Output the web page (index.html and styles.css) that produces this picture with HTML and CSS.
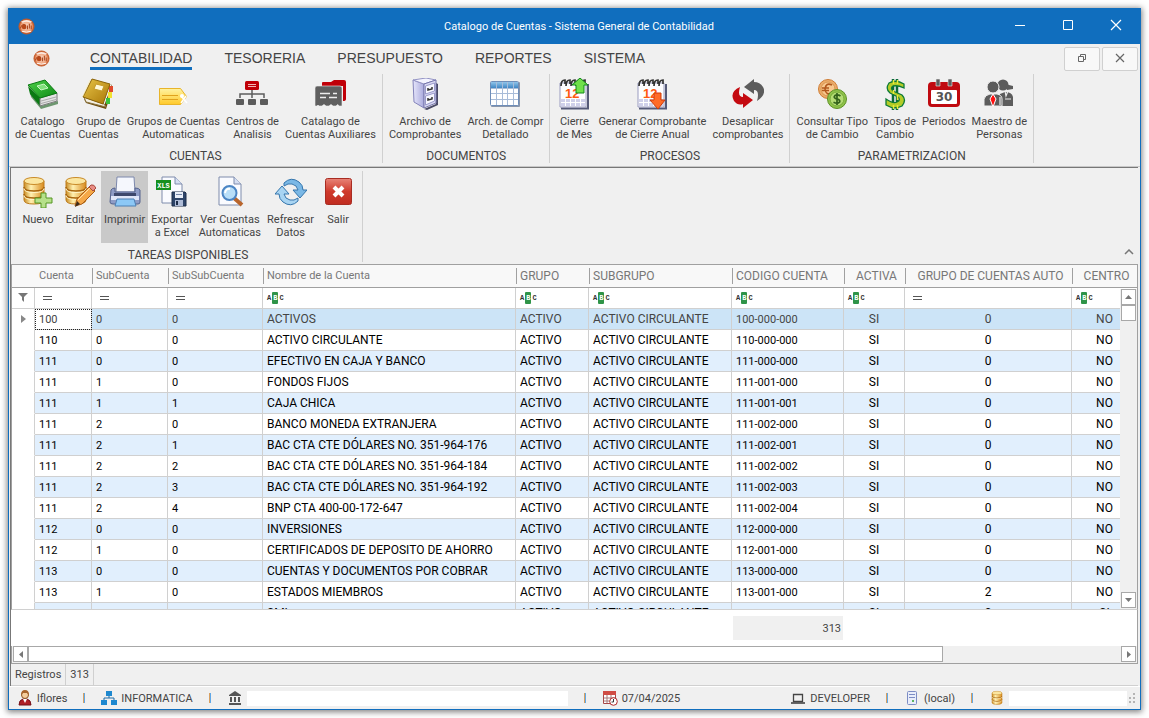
FILE: index.html
```html
<!DOCTYPE html>
<html lang="es">
<head>
    <meta charset="UTF-8">
    <meta name="viewport" content="width=device-width, initial-scale=1.0">
    <title>Catalogo de Cuentas - Sistema General de Contabilidad</title>
    <link rel="stylesheet" href="styles.css">
</head>
<body>
    <!-- Degradados y simbolos compartidos -->
    <svg class="defs" width="0" height="0" aria-hidden="true">
        <defs>
            <linearGradient id="gGold" x1="0" x2="1"><stop offset="0" stop-color="#c98b22"/><stop offset=".35" stop-color="#fff0b0"/><stop offset="1" stop-color="#d98a1c"/></linearGradient>
            <linearGradient id="gGreen" x1="0" x2="1" y2="1"><stop offset="0" stop-color="#4fd04a"/><stop offset="1" stop-color="#0c8a14"/></linearGradient>
            <linearGradient id="gBook" x1="0" x2="1" y2="1"><stop offset="0" stop-color="#e8c548"/><stop offset="1" stop-color="#a87506"/></linearGradient>
            <linearGradient id="gTag" x2="0" y2="1"><stop offset="0" stop-color="#fff3a0"/><stop offset="1" stop-color="#ffc92a"/></linearGradient>
            <linearGradient id="gCab" x1="0" x2="1"><stop offset="0" stop-color="#e6e6fb"/><stop offset="1" stop-color="#a9a9dc"/></linearGradient>
            <linearGradient id="gBlue" x2="0" y2="1"><stop offset="0" stop-color="#8fc4ea"/><stop offset="1" stop-color="#3f86c4"/></linearGradient>
            <linearGradient id="gRed" x2="0" y2="1"><stop offset="0" stop-color="#e88478"/><stop offset=".5" stop-color="#cf3a2c"/><stop offset="1" stop-color="#c02c20"/></linearGradient>
            <radialGradient id="gApp"><stop offset="0" stop-color="#fbe0d0"/><stop offset=".7" stop-color="#f0a47c"/><stop offset="1" stop-color="#c4501c"/></radialGradient>
        </defs>
        <symbol id="app" viewBox="0 0 18 18">
            <circle cx="9" cy="9" r="8" fill="url(#gApp)" stroke="#c65a28"/>
            <path d="M3 4q6-4 12 0l-2 1q-4-2-8 0z" fill="#fff" opacity=".8"/>
            <path d="M2.500 11q2-6 6-3M10 12V8M12 11V6M14 12V8" stroke="#a8441c" stroke-width="1.100" fill="none"/>
            <circle cx="6.500" cy="9.500" r="2.500" fill="#b8481a"/>
            <path d="M4 14q5 2 10 0" stroke="#fff" fill="none"/>
        </symbol>
        <symbol id="db" viewBox="0 0 32 32">
            <path d="M2 5v19q0 4 10 4t10-4V5z" fill="url(#gGold)" stroke="#bd7b1a"/>
            <path d="M2 11q0 4 10 4t10-4M2 18q0 4 10 4t10-4" fill="none" stroke="#a8650f" stroke-width="1.600"/>
            <path d="M2 12.500q0 4 10 4t10-4M2 19.500q0 4 10 4t10-4" fill="none" stroke="#fff4c8"/>
            <ellipse cx="12" cy="5" rx="10" ry="3.500" fill="#fbe6a0" stroke="#c98a28"/>
        </symbol>
        <symbol id="cal12" viewBox="0 0 32 32">
            <path d="M3 30.500h27V6" fill="none" stroke="#555a78" stroke-width="2"/>
            <path d="M2 5h26v24H2z" fill="#fdfdff" stroke="#9a9cc0"/>
            <path d="M3 21h24v7H3z" fill="#cfd0ea"/>
            <path d="M3 24.500h24M7.500 21v7M12.500 21v7M17.500 21v7M22.500 21v7" stroke="#fff"/>
            <path d="M3 8q0-6 4-6v4M8 8q0-6 4-6v4M13 8q0-6 4-6v4M18 8q0-6 4-6v4M23 8q0-6 4-6v4" fill="none" stroke="#333" stroke-width="1.700"/>
            <text x="7" y="20" class="num12">12</text>
        </symbol>
    </svg>

    <div class="window">
        <header class="titlebar">
            <svg class="app-icon"><use href="#app"/></svg>
            <h1>Catalogo de Cuentas - Sistema General de Contabilidad</h1>
            <div class="window-buttons">
                <button type="button" aria-label="Minimizar"><svg width="12" height="12"><path d="M1 6.500h10" stroke="#fff"/></svg></button>
                <button type="button" aria-label="Maximizar"><svg width="12" height="12"><path d="M1.500 1.500h9v9h-9z" fill="none" stroke="#fff"/></svg></button>
                <button type="button" aria-label="Cerrar"><svg width="12" height="12"><path d="M1 1l10 10M11 1L1 11" stroke="#fff" stroke-width="1.200"/></svg></button>
            </div>
        </header>

        <!-- Pestañas -->
        <nav class="tabs">
            <svg class="app-icon"><use href="#app"/></svg>
            <a href="#" class="active">CONTABILIDAD</a>
            <a href="#">TESORERIA</a>
            <a href="#">PRESUPUESTO</a>
            <a href="#">REPORTES</a>
            <a href="#">SISTEMA</a>
            <div class="child-buttons">
                <button type="button" aria-label="Restaurar"><svg width="10" height="10"><path d="M1.500 3.500h5v5h-5zM3.500 3.500v-2h5v5h-2" fill="none" stroke="#666"/></svg></button>
                <button type="button" aria-label="Cerrar ventana"><svg width="10" height="10"><path d="M1 1l8 8M9 1L1 9" stroke="#666" stroke-width="1.200"/></svg></button>
            </div>
        </nav>

        <!-- Cinta principal -->
        <div class="ribbon">
            <section class="group">
                <div class="items">
                    <button type="button">
                        <svg viewBox="0 0 32 32"><path d="M3 14l11 14 17-5v3L14 31 4 19z" fill="#175c1b" opacity=".6"/><path d="M1 8l12 12v8L3 16z" fill="#0a7a12"/><path d="M13 20l17-5v8l-17 5z" fill="#e4e4e4" stroke="#777"/><path d="M14 23l15-4M14 25.500l15-4" stroke="#aaa"/><path d="M1 7l17-5 12 13-17 5z" fill="url(#gGreen)" stroke="#0b7a12"/><path d="M10 8l7-2 4 4-7 2z" fill="#7fe07a" stroke="#c8f5c2"/></svg>
                        <span>Catalogo<br>de Cuentas</span></button>
                    <button type="button">
                        <svg viewBox="0 0 32 32"><path d="M2 21l20 7 8-22v6l-6 19L4 25z" fill="#6b4a0a"/><path d="M2 19l20 7 2 3-20-5z" fill="#f3efe2" stroke="#8b7440"/><path d="M27 8h4v6h-4z" fill="#e04a2c"/><path d="M26 14h4v6h-4z" fill="#f2e230"/><path d="M24 20h4v6h-4z" fill="#3cc23c"/><path d="M10 1l18 5-7 20-20-7z" fill="url(#gBook)" stroke="#8a6208"/><path d="M8 2L1 18" stroke="#fff0a8" opacity=".6"/><path d="M14 6l8 2-2 5-8-2z" fill="#fff8d8" stroke="#c59a28"/></svg>
                        <span>Grupo de<br>Cuentas</span></button>
                    <button type="button">
                        <svg viewBox="0 0 32 32"><path d="M2.500 10.500h21l6 8-6 8h-21z" fill="url(#gTag)" stroke="#e8b42a"/><path d="M5 17.500h16M5 21.500h16" stroke="#e0a21c"/><circle cx="25" cy="18" r="2" fill="#fff"/><path d="M24 18l6 7M29 18l-5 7" stroke="#fff" stroke-width="1.500"/></svg>
                        <span>Grupos de Cuentas<br>Automaticas</span></button>
                    <button type="button">
                        <svg viewBox="0 0 32 32"><rect x="9" y="3" width="14" height="9" rx="1.500" fill="#c00008"/><path d="M12 6.500h8M12 8.500h8" stroke="#f2b8b8"/><path d="M16 12v8M4 20v-4h24v4" fill="none" stroke="#5c5c5c" stroke-width="1.500"/><rect y="21" width="8" height="6" rx="1" fill="#5c5c5c"/><rect x="12" y="21" width="8" height="6" rx="1" fill="#5c5c5c"/><rect x="24" y="21" width="8" height="6" rx="1" fill="#5c5c5c"/></svg>
                        <span>Centros de<br>Analisis</span></button>
                    <button type="button">
                        <svg viewBox="0 0 32 32"><path d="M8 8V5q0-1 1-1h8l3-2h10q2 0 2 2v17q0 2-3 2V8z" fill="#c00008"/><path d="M1 10q0-2 2-2h23q2 0 2 2v18h-3q-1-3-3 0h-3q-2-3-4 0h-3q-2-3-4 0H5q-1-2-2 0H1z" fill="#5f5f5f" stroke="#efefef" stroke-width=".600"/><path d="M6 15.500h10M19 15.500h4M6 19.500h6M15 19.500h8" stroke="#eee" stroke-width="1.500"/></svg>
                        <span>Catalago de<br>Cuentas Auxiliares</span></button>
                </div>
                <h2>CUENTAS</h2>
            </section>
            <section class="group">
                <div class="items">
                    <button type="button">
                        <svg viewBox="0 0 32 32"><path d="M15 31l12-5V5l2 1v21l-11 5z" fill="#4a4a66"/><path d="M4 2l11 4v24L5 24z" fill="url(#gCab)" stroke="#8484ba"/><path d="M4 2l13-2 10 2-12 4z" fill="#f4f4ff" stroke="#9393c4"/><path d="M15 6l12-4v23l-12 5z" fill="#d8d8f2" stroke="#7676ac"/><path d="M16.500 8l9-3v8l-9 3zM16.500 18l9-3v8l-9 4z" fill="#f6f6ff" stroke="#9a9acb"/><path d="M19 10v2l4-1V9M19 20v2l4-1v-2" fill="none" stroke="#333" stroke-width="1.500"/></svg>
                        <span>Archivo de<br>Comprobantes</span></button>
                    <button type="button">
                        <svg viewBox="0 0 32 32"><rect x="2" y="4" width="29" height="25" rx="1" fill="#8a96aa"/><rect x="1.500" y="3.500" width="28" height="24" rx="1" fill="#fff" stroke="#6e8db8"/><path d="M2 4h27v6H2z" fill="url(#gBlue)"/><path d="M2 10.500h27M2 15.500h27M2 21.500h27M7.500 4v23M13.500 4v23M18.500 4v23M24.500 4v23" stroke="#a8bcd8"/></svg>
                        <span>Arch. de Compr<br>Detallado</span></button>
                </div>
                <h2>DOCUMENTOS</h2>
            </section>
            <section class="group">
                <div class="items">
                    <button type="button">
                        <svg viewBox="0 0 32 32"><use href="#cal12"/><path d="M22 0l8 7h-4v8h-8V7h-4z" fill="#6fe04a" stroke="#138a1c"/></svg>
                        <span>Cierre<br>de Mes</span></button>
                    <button type="button">
                        <svg viewBox="0 0 32 32"><use href="#cal12"/><path d="M18 15h7v7h4l-7 9-8-9h4z" fill="#ff6b28" stroke="#cf3b08"/></svg>
                        <span>Generar Comprobante<br>de Cierre Anual</span></button>
                    <button type="button">
                        <svg viewBox="0 0 32 32"><path d="M8 9Q-3 14 2 23q4 5 9 3v4l10-8-10-7v4Q5 19 8 9z" fill="#c40a10"/><path d="M22 1L12 9l10 7v-4q6 0 3 11 10-7 6-14-3-5-9-5z" fill="#5c5c5c"/></svg>
                        <span>Desaplicar<br>comprobantes</span></button>
                </div>
                <h2>PROCESOS</h2>
            </section>
            <section class="group">
                <div class="items">
                    <button type="button">
                        <svg viewBox="0 0 32 32"><circle cx="12" cy="11" r="9.500" fill="#ecac6a" stroke="#cf7d35"/><circle cx="12" cy="11" r="7" fill="#f8c88e" stroke="#da9650"/><path d="M16 7q-6-3-7 4 1 7 7 4M6 10h7M6 12.500h7" fill="none" stroke="#b2581c" stroke-width="1.600"/><circle cx="21" cy="21" r="9.500" fill="#8fc24a" stroke="#5d9126"/><circle cx="21" cy="21" r="7" fill="#b4dc74" stroke="#76ab38"/><path d="M24.500 18q-3-2-5.500-.5-2 2 1 3.200 5 1 3.500 3.500-2 2-6 0M21 15v12" fill="none" stroke="#32611a" stroke-width="1.700"/></svg>
                        <span>Consultar Tipo<br>de Cambio</span></button>
                    <button type="button">
                        <svg viewBox="0 0 32 32"><path d="M14 1v31M18 1v31" stroke="#0c6b38" stroke-width="2.500"/><path d="M25 10V6q-8-5-15-1-4 6 1 10l8 4q3 3-1 5-4 2-11-3v6q8 5 16 1 5-6 0-11l-9-4q-3-3 0-5 5-1 11 2z" fill="#b4cc28" stroke="#0c7a38" stroke-width="1.300"/><path d="M14.500 2v4M18.500 2v4M14.500 12v4M18.500 17v5M14.500 27v4M18.500 27v4" stroke="#e8ea3a" stroke-width="1.500"/></svg>
                        <span>Tipos de<br>Cambio</span></button>
                    <button type="button">
                        <svg viewBox="0 0 32 32"><rect y="4" width="32" height="25" rx="4" fill="#c00a10"/><rect x="3" y="12" width="26" height="14" rx="1" fill="#fff"/><path d="M8 1h4v7H8zM20 1h4v7h-4z" fill="#5c5c5c" stroke="#efefef" stroke-width=".600"/><text x="16" y="23" class="num30">30</text></svg>
                        <span>Periodos</span></button>
                    <button type="button">
                        <svg viewBox="0 0 32 32"><g fill="#5c5c5c"><circle cx="20" cy="7" r="5.500"/><path d="M22 6l8 2v3l-6 1zM17 16l5-2q7 0 8 5v9H17z"/><circle cx="10" cy="9" r="6" stroke="#efefef"/><path d="M1 28V21q1-4 6-5h7q5 1 5 5v7z" stroke="#efefef"/></g><path d="M10 16l3 5-3 8-3-8z" fill="#ff1010" stroke="#fff"/><path d="M22 13l1 5 2-5M22 21h6M17 19v8" stroke="#efefef" stroke-width="1.200" fill="none"/></svg>
                        <span>Maestro de<br>Personas</span></button>
                </div>
                <h2>PARAMETRIZACION</h2>
            </section>
        </div>

        <main class="child">
            <!-- Tareas -->
            <div class="tasks">
                <section class="group">
                    <div class="items">
                        <button type="button">
                            <svg viewBox="0 0 32 32"><use href="#db"/><path d="M19 17h5v5h6v5h-6v5h-5v-5h-6v-5h6z" fill="#b6e08a" stroke="#559622"/></svg>
                            <span>Nuevo</span></button>
                        <button type="button">
                            <svg viewBox="0 0 32 32"><use href="#db"/><path d="M11 30l2-7 13-13 5 5-13 13z" fill="#f5a848" stroke="#a85c18"/><path d="M14 24L27 11" stroke="#ffe2a8"/><path d="M25 11l2-2q3-1 5 3l-3 3z" fill="#e88c84" stroke="#a84a40"/><path d="M11 31l2-6 3 3z" fill="#3c2c1c"/></svg>
                            <span>Editar</span></button>
                        <button type="button" class="pressed">
                            <svg viewBox="0 0 32 32"><path d="M8 1h17l1 15H7z" fill="#f5f7fd" stroke="#7c88ac"/><path d="M2 14q1-2 4-2v4h20v-4q4 0 5 2v12q0 2-2 2H4q-3 0-3-2z" fill="#8e9cc6" stroke="#56648e"/><path d="M5 17h22v4H5z" fill="#3d486c"/><path d="M2 20h28v4H2z" fill="#dfe6f8"/><path d="M8 23h17l2 7H6z" fill="#8cc8f6" stroke="#4c80b4"/></svg>
                            <span>Imprimir</span></button>
                        <button type="button">
                            <svg viewBox="0 0 32 32"><path d="M6 1h13l7 7v19H6z" fill="#fafbff" stroke="#7e8cac"/><path d="M19 1v7h7" fill="#d5def2" stroke="#7e8cac"/><path d="M0 4h15v10H0z" fill="#16901e"/><text x="7.500" y="12" class="xls">XLS</text><path d="M16 16h13l1 1v13H16z" fill="#2d4468" stroke="#1d2c48"/><path d="M19 16h8v6h-8z" fill="#e9eef8"/><path d="M20 18.500h6" stroke="#7485a8"/><path d="M19 24h8v6h-8z" fill="#aebbd6"/><path d="M20 25h2v4h-2z" fill="#1d2c48"/></svg>
                            <span>Exportar<br>a Excel</span></button>
                        <button type="button">
                            <svg viewBox="0 0 32 32"><path d="M5 1h15l7 7v21H5z" fill="#fafbff" stroke="#7e8cac"/><path d="M20 1v7h7" fill="#d5def2" stroke="#7e8cac"/><path d="M20 22l8 7" stroke="#b8652c" stroke-width="4"/><circle cx="15.500" cy="17" r="7" fill="#b8def8" stroke="#4c85c4" stroke-width="2"/><path d="M11 17q1-5 5-4" stroke="#fff" stroke-width="2" fill="none"/></svg>
                            <span>Ver Cuentas<br>Automaticas</span></button>
                        <button type="button">
                            <svg viewBox="0 0 32 32"><path d="M9 7Q16 0 24 6q4 3 4 8h4l-7 8-7-8h5q-1-5-6-6-4-1-8 2z" fill="#7ab8e6" stroke="#3475ac"/><path d="M23 25q-7 7-15 1-4-3-4-8H0l7-8 7 8H9q1 5 6 6 4 1 8-2z" fill="#a8d4f2" stroke="#3475ac"/></svg>
                            <span>Refrescar<br>Datos</span></button>
                        <button type="button">
                            <svg viewBox="0 0 32 32"><rect x="3.500" y="2.500" width="26" height="26" rx="2" fill="url(#gRed)" stroke="#a82c22"/><path d="M12 11l9 9M21 11l-9 9" stroke="#fff" stroke-width="4"/></svg>
                            <span>Salir</span></button>
                    </div>
                    <h2>TAREAS DISPONIBLES</h2>
                </section>
                <button type="button" class="collapse" aria-label="Contraer cinta"><svg width="10" height="6"><path d="M1 5l4-4 4 4" fill="none" stroke="#777" stroke-width="1.500"/></svg></button>
            </div>

            <!-- Catalogo -->
            <div class="grid">
                <table>
                    <colgroup>
                        <col class="c-mark"><col class="c-cuenta"><col class="c-sub"><col class="c-subsub"><col><col class="c-grupo"><col class="c-subgrupo"><col class="c-codigo"><col class="c-activa"><col class="c-auto"><col class="c-centro">
                    </colgroup>
                    <thead>
                        <tr>
                            <th></th>
                            <th><span>Cuenta</span></th>
                            <th><span>SubCuenta</span></th>
                            <th><span>SubSubCuenta</span></th>
                            <th><span>Nombre de la Cuenta</span></th>
                            <th class="caps"><span>GRUPO</span></th>
                            <th class="caps"><span>SUBGRUPO</span></th>
                            <th class="caps"><span>CODIGO CUENTA</span></th>
                            <th class="caps center"><span>ACTIVA</span></th>
                            <th class="caps center"><span>GRUPO DE CUENTAS AUTO</span></th>
                            <th class="caps center"><span>CENTRO</span></th>
                        </tr>
                        <tr class="filters">
                            <td class="mark"><svg width="10" height="9"><path d="M0 0h10L6 4v5L4 7V4z" fill="#777"/></svg></td>
                            <td><label><i class="eq"></i><input type="text" aria-label="Filtrar Cuenta"></label></td>
                            <td><label><i class="eq"></i><input type="text" aria-label="Filtrar SubCuenta"></label></td>
                            <td><label><i class="eq"></i><input type="text" aria-label="Filtrar SubSubCuenta"></label></td>
                            <td><label><span class="abc">A<b>B</b>C</span><input type="text" aria-label="Filtrar Nombre"></label></td>
                            <td><label><span class="abc">A<b>B</b>C</span><input type="text" aria-label="Filtrar Grupo"></label></td>
                            <td><label><span class="abc">A<b>B</b>C</span><input type="text" aria-label="Filtrar Subgrupo"></label></td>
                            <td><label><span class="abc">A<b>B</b>C</span><input type="text" aria-label="Filtrar Codigo"></label></td>
                            <td><label><span class="abc">A<b>B</b>C</span><input type="text" aria-label="Filtrar Activa"></label></td>
                            <td><label><i class="eq"></i><input type="text" aria-label="Filtrar Grupo Auto"></label></td>
                            <td><label><span class="abc">A<b>B</b>C</span><input type="text" aria-label="Filtrar Centro"></label></td>
                        </tr>
                    </thead>
                    <tbody>
                        <tr class="selected"><td class="mark"><svg width="5" height="8"><path d="M0 0l5 4-5 4z" fill="#888"/></svg></td><td class="focused">100</td><td>0</td><td>0</td><td>ACTIVOS</td><td>ACTIVO</td><td>ACTIVO CIRCULANTE</td><td>100-000-000</td><td>SI</td><td>0</td><td>NO</td></tr>
                        <tr><td class="mark"></td><td>110</td><td>0</td><td>0</td><td>ACTIVO CIRCULANTE</td><td>ACTIVO</td><td>ACTIVO CIRCULANTE</td><td>110-000-000</td><td>SI</td><td>0</td><td>NO</td></tr>
                        <tr><td class="mark"></td><td>111</td><td>0</td><td>0</td><td>EFECTIVO EN CAJA Y BANCO</td><td>ACTIVO</td><td>ACTIVO CIRCULANTE</td><td>111-000-000</td><td>SI</td><td>0</td><td>NO</td></tr>
                        <tr><td class="mark"></td><td>111</td><td>1</td><td>0</td><td>FONDOS FIJOS</td><td>ACTIVO</td><td>ACTIVO CIRCULANTE</td><td>111-001-000</td><td>SI</td><td>0</td><td>NO</td></tr>
                        <tr><td class="mark"></td><td>111</td><td>1</td><td>1</td><td>CAJA CHICA</td><td>ACTIVO</td><td>ACTIVO CIRCULANTE</td><td>111-001-001</td><td>SI</td><td>0</td><td>NO</td></tr>
                        <tr><td class="mark"></td><td>111</td><td>2</td><td>0</td><td>BANCO MONEDA EXTRANJERA</td><td>ACTIVO</td><td>ACTIVO CIRCULANTE</td><td>111-002-000</td><td>SI</td><td>0</td><td>NO</td></tr>
                        <tr><td class="mark"></td><td>111</td><td>2</td><td>1</td><td>BAC CTA CTE DÓLARES NO. 351-964-176</td><td>ACTIVO</td><td>ACTIVO CIRCULANTE</td><td>111-002-001</td><td>SI</td><td>0</td><td>NO</td></tr>
                        <tr><td class="mark"></td><td>111</td><td>2</td><td>2</td><td>BAC CTA CTE DÓLARES NO. 351-964-184</td><td>ACTIVO</td><td>ACTIVO CIRCULANTE</td><td>111-002-002</td><td>SI</td><td>0</td><td>NO</td></tr>
                        <tr><td class="mark"></td><td>111</td><td>2</td><td>3</td><td>BAC CTA CTE DÓLARES NO. 351-964-192</td><td>ACTIVO</td><td>ACTIVO CIRCULANTE</td><td>111-002-003</td><td>SI</td><td>0</td><td>NO</td></tr>
                        <tr><td class="mark"></td><td>111</td><td>2</td><td>4</td><td>BNP CTA 400-00-172-647</td><td>ACTIVO</td><td>ACTIVO CIRCULANTE</td><td>111-002-004</td><td>SI</td><td>0</td><td>NO</td></tr>
                        <tr><td class="mark"></td><td>112</td><td>0</td><td>0</td><td>INVERSIONES</td><td>ACTIVO</td><td>ACTIVO CIRCULANTE</td><td>112-000-000</td><td>SI</td><td>0</td><td>NO</td></tr>
                        <tr><td class="mark"></td><td>112</td><td>1</td><td>0</td><td>CERTIFICADOS DE DEPOSITO DE AHORRO</td><td>ACTIVO</td><td>ACTIVO CIRCULANTE</td><td>112-001-000</td><td>SI</td><td>0</td><td>NO</td></tr>
                        <tr><td class="mark"></td><td>113</td><td>0</td><td>0</td><td>CUENTAS Y DOCUMENTOS POR COBRAR</td><td>ACTIVO</td><td>ACTIVO CIRCULANTE</td><td>113-000-000</td><td>SI</td><td>0</td><td>NO</td></tr>
                        <tr><td class="mark"></td><td>113</td><td>1</td><td>0</td><td>ESTADOS MIEMBROS</td><td>ACTIVO</td><td>ACTIVO CIRCULANTE</td><td>113-001-000</td><td>SI</td><td>2</td><td>NO</td></tr>
                        <tr><td class="mark"></td><td>113</td><td>2</td><td>0</td><td>SMI</td><td>ACTIVO</td><td>ACTIVO CIRCULANTE</td><td>113-002-000</td><td>SI</td><td>0</td><td>SI</td></tr>
                    </tbody>
                </table>
                <div class="vscroll">
                    <button type="button" aria-label="Subir"><svg width="7" height="4"><path d="M0 4l3.500-4L7 4z" fill="#777"/></svg></button>
                    <div class="thumb"></div>
                    <button type="button" class="last" aria-label="Bajar"><svg width="7" height="4"><path d="M0 0h7L3.500 4z" fill="#777"/></svg></button>
                </div>
            </div>
            <div class="summary"><output>313</output></div>
            <div class="hscroll">
                <button type="button" aria-label="Izquierda"><svg width="4" height="7"><path d="M4 0v7L0 3.500z" fill="#777"/></svg></button>
                <div class="thumb"></div>
                <button type="button" aria-label="Derecha"><svg width="4" height="7"><path d="M0 0v7l4-3.500z" fill="#777"/></svg></button>
            </div>
            <div class="records"><span>Registros</span><span>313</span></div>
        </main>

        <!-- Barra de estado -->
        <footer class="status">
            <svg viewBox="0 0 16 16"><path d="M2 15q0-5 4-6h4q4 1 4 6z" fill="#b02028" stroke="#741018"/><path d="M6 9l2 4 2-4z" fill="#fff"/><circle cx="8" cy="5" r="3.500" fill="#f4cc9c" stroke="#8c5020"/><path d="M4 5q0-5 4-5t4 5l-2-2-4 0z" fill="#a8642c"/></svg>
            <span>lflores</span><i class="sep"></i>
            <svg viewBox="0 0 16 16"><path d="M5 1h6v5H5zM0 10h6v5H0zM10 10h6v5h-6z" fill="#1e88cf"/><path d="M8 6v2M3 10V8h10v2" fill="none" stroke="#1e6ca8"/></svg>
            <span>INFORMATICA</span><i class="sep"></i>
            <svg viewBox="0 0 16 16"><path d="M8 1l6 4v1H2V5zM3 7h2v5H3zM7 7h2v5H7zM11 7h2v5h-2zM2 13h12v2H2z" fill="#555"/></svg>
            <div class="blank wide"></div><i class="sep"></i>
            <svg viewBox="0 0 16 16"><path d="M1.500 1.500h12v12h-12z" fill="#fff" stroke="#a84848"/><path d="M1 1h13v4H1z" fill="#d04c44"/><path d="M2 8h11M2 11h11M5 5v8M9 5v8" stroke="#a87878"/><circle cx="11.500" cy="11.500" r="3.800" fill="#fff" stroke="#b02828"/><path d="M11.500 9v3h-2" fill="none" stroke="#333"/></svg>
            <span>07/04/2025</span>
            <svg class="laptop" viewBox="0 0 16 16"><path d="M3.500 4.500h9v7h-9z" fill="none" stroke="#444" stroke-width="1.300"/><path d="M1 13h14" stroke="#444" stroke-width="1.600"/></svg>
            <span>DEVELOPER</span><i class="sep"></i>
            <svg viewBox="0 0 16 16"><rect x="3.500" y="1.500" width="9" height="13" rx="1" fill="#e8edfa" stroke="#7c8cc4"/><path d="M5 4.500h6M5 7.500h6" stroke="#7c8cc4"/><circle cx="9" cy="11" r="1" fill="#2ca02c"/></svg>
            <span>(local)</span><i class="sep"></i>
            <svg viewBox="-4 0 32 30"><use href="#db" width="32" height="32"/></svg>
            <div class="blank"></div>
            <svg class="grip" viewBox="0 0 8 12"><path d="M6 1h2v2H6zM2 5h2v2H2zM6 5h2v2H6zM2 9h2v2H2zM6 9h2v2H6z" fill="#b4b4b4"/></svg>
        </footer>
    </div>
</body>
</html>
```
FILE: styles.css
```css
* {
    box-sizing: border-box;
}
body {
    display: flex;
    height: 100vh;
    margin: 0;
    padding: 8px;
    background: #fff;
    color: #444;
    font-family: Roboto, "Liberation Sans", sans-serif;
    font-size: 11px;
    line-height: 13px;
}
button {
    padding: 0;
    border: none;
    background: none;
    color: inherit;
    font: inherit;
}
h1, h2 {
    margin: 0;
    font-size: 11px;
    font-weight: normal;
}
h2, .caps {
    font-size: 12px;
}
.defs {
    position: absolute;
}
.window {
    display: flex;
    flex-direction: column;
    flex: 1;
    min-width: 0;
    border: 1px solid #106ebe;
    background: #f0f0f0;
    box-shadow: 0 1px 6px 1px rgba(0, 0, 0, 0.5);
}

/* Barra de titulo */
.titlebar {
    display: grid;
    grid-template-columns: 1fr auto 1fr;
    align-items: center;
    height: 35px;
    padding-left: 9px;
    background: #106ebe;
    color: #fff;
}
.app-icon {
    width: 17px;
    height: 17px;
}
.window-buttons {
    display: flex;
    justify-content: flex-end;
}
.window-buttons button {
    width: 48px;
    height: 34px;
}

/* Pestañas */
.tabs {
    display: flex;
    align-items: center;
    gap: 32px;
    height: 29px;
    padding-left: 24px;
    font-family: "Liberation Sans", sans-serif;
    font-size: 14px;
}
.tabs .app-icon {
    margin-right: 8px;
}
.tabs a {
    padding-top: 2px;
    border-bottom: 3px solid transparent;
    color: #444;
    line-height: 17px;
    text-decoration: none;
}
.tabs .active {
    border-color: #106ebe;
}
.child-buttons {
    display: flex;
    gap: 2px;
    margin-left: auto;
    padding-right: 2px;
}
.child-buttons button {
    width: 36px;
    height: 24px;
    border: 1px solid #d0d0d0;
    border-radius: 2px;
    background: #f8f8f8;
}

/* Cintas */
.ribbon {
    display: flex;
    height: 94px;
    padding: 1px 0 3px;
    border-bottom: 1px solid #c8c8c8;
}
.group {
    display: flex;
    flex-direction: column;
    justify-content: space-between;
    padding: 0 3px;
    border-right: 1px solid #d0d0d0;
    white-space: nowrap;
}
.group h2 {
    text-align: center;
}
.items {
    display: flex;
}
.items button {
    display: flex;
    flex-direction: column;
    align-items: center;
    gap: 5px;
    min-width: 42px;
    height: 72px;
    padding: 4px 3px 0;
}
.items svg {
    width: 32px;
    height: 32px;
}
.items .pressed {
    background: #c9c9c9;
}
.num12 {
    fill: #ff5a10;
    font: bold 13px "Liberation Sans", sans-serif;
}
.num30 {
    fill: #555;
    font: bold 12px "DejaVu Sans", sans-serif;
    text-anchor: middle;
}
.xls {
    fill: #fff;
    font: bold 7px "Liberation Mono", monospace;
    text-anchor: middle;
}
.child {
    display: flex;
    flex-direction: column;
    flex: 1;
    min-height: 0;
    margin: 0 2px 0 1px;
    border-top: 1px solid #777;
    border-left: 1px solid #777;
}
.tasks {
    display: flex;
    justify-content: space-between;
    height: 96px;
    padding: 3px 3px 2px;
}
.tasks .items button {
    padding-top: 5px;
}
.collapse {
    align-self: flex-end;
    width: 12px;
    height: 22px;
}

/* Tabla */
.grid {
    position: relative;
    flex: 1;
    min-height: 0;
    overflow: hidden;
    border: 1px solid #a0a0a0;
    border-bottom: 1px solid #d0d0d0;
    background: #fff;
}
table {
    width: 100%;
    table-layout: fixed;
    border-collapse: separate;
    border-spacing: 0;
}
.c-mark { width: 23px; }
.c-cuenta { width: 57px; }
.c-sub { width: 76px; }
.c-subsub { width: 95px; }
.c-grupo { width: 73px; }
.c-subgrupo { width: 143px; }
.c-codigo { width: 112px; }
.c-activa { width: 61px; }
.c-auto { width: 167px; }
.c-centro { width: 65px; }
th {
    height: 23px;
    padding: 3px 0;
    border-bottom: 1px solid #a0a0a0;
    background: #f8f8f8;
    color: #777;
    font-weight: normal;
    text-align: left;
    white-space: nowrap;
}
th span {
    display: block;
    padding-left: 3px;
    border-left: 1px solid #a0a0a0;
    line-height: 16px;
}
th:nth-child(2) span {
    border-color: transparent;
}
.center {
    text-align: center;
}
td {
    height: 21px;
    padding: 0 4px;
    border-right: 1px solid #d0d0d0;
    border-bottom: 1px solid #d0d0d0;
    color: #000;
    white-space: nowrap;
}
td:last-child {
    border-right: none;
}
tbody td:nth-child(n+5) {
    font-size: 12px;
}
tbody td:nth-child(8) {
    font-size: 11px;
}
tbody td:nth-child(n+9) {
    text-align: center;
}
tbody tr:nth-child(odd) td {
    background: #e1effd;
}
tbody tr.selected td {
    background: #cce4f7;
    color: #444;
}
tbody tr.selected td.focused {
    outline: 1px dotted #222;
    outline-offset: -1px;
    background: #fff;
}
tbody tr td.mark:first-child {
    border-bottom-color: #fff;
    background: #fff;
}
.mark {
    padding: 0;
    text-align: center;
}
.filters label {
    display: flex;
    align-items: center;
    gap: 4px;
}
.filters input {
    flex: 1;
    min-width: 0;
    height: 16px;
    padding: 0;
    border: none;
    background: none;
    font: inherit;
}
.eq {
    width: 9px;
    height: 4px;
    margin-left: 4px;
    border: solid #555;
    border-width: 1px 0;
}
.abc {
    display: flex;
    align-items: center;
    color: #333;
    font: bold 7px "Liberation Mono", monospace;
}
.abc b {
    padding: 2px 1px;
    margin: 0 1px;
    border-radius: 1px;
    background: #2f9448;
    color: #fff;
}

/* Barras de desplazamiento */
.vscroll {
    position: absolute;
    top: 24px;
    right: 0;
    bottom: 0;
    display: flex;
    flex-direction: column;
    width: 17px;
    padding: 0 1px 1px;
    background: #f0f0f0;
}
.vscroll button,
.hscroll button,
.thumb {
    display: flex;
    align-items: center;
    justify-content: center;
    width: 15px;
    height: 16px;
    border: 1px solid #a8a8a8;
    background: #fff;
}
.vscroll .last {
    margin-top: auto;
}
.summary {
    display: flex;
    justify-content: flex-end;
    padding: 6px 294px 6px 0;
    border-right: 1px solid #a0a0a0;
    background: #fff;
}
.summary output {
    width: 110px;
    padding: 6px 2px 5px;
    background: #f0f0f0;
    text-align: right;
}
.hscroll {
    display: flex;
    padding: 0 1px 1px;
    border: 1px solid #a0a0a0;
    border-top: none;
}
.hscroll .thumb {
    width: 81.5%;
}
.hscroll button:last-child {
    margin-left: auto;
}
.records {
    display: flex;
    height: 22px;
    border-bottom: 1px solid #d0d0d0;
}
.records span {
    padding: 4px;
    border-right: 1px solid #d0d0d0;
}

/* Barra de estado */
.status {
    display: flex;
    align-items: center;
    height: 23px;
    padding: 0 5px 0 8px;
    border-top: 1px solid #fff;
}
.status svg {
    width: 16px;
    height: 16px;
    margin-right: 4px;
}
.sep {
    width: 2px;
    height: 10px;
    margin: 0 16px;
    border-left: 1px solid #d8a060;
    border-right: 1px solid #60a8e8;
}
.blank {
    width: 118px;
    height: 15px;
    background: #fff;
}
.blank.wide {
    flex: 1;
}
.status .laptop {
    margin-left: 110px;
}
.status .grip {
    width: 8px;
    height: 12px;
    margin: 0;
}
```
